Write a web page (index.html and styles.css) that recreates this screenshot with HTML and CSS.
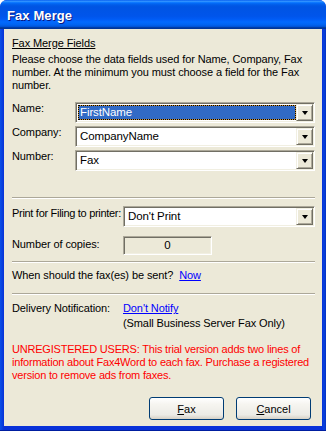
FILE: index.html
```html
<!DOCTYPE html>
<html>
<head>
<meta charset="utf-8">
<link rel="stylesheet" href="styles.css">
</head>
<body>
<div class="window">
  <div class="titlebar"><span class="title">Fax Merge</span></div>
  <div class="frame">
    <div class="client">
      <div class="heading">Fax Merge Fields</div>
      <div class="intro">Please choose the data fields used for Name, Company, Fax number. At the minimum you must choose a field for the Fax number.</div>

      <div class="fields">
        <div class="row">
          <div class="label narrow">Name:</div>
          <div class="combo">
            <div class="combo-text focused"><span class="focus-inner">FirstName</span></div>
            <div class="drop"><span class="arrow"></span></div>
          </div>
        </div>
        <div class="row">
          <div class="label narrow">Company:</div>
          <div class="combo">
            <div class="combo-text">CompanyName</div>
            <div class="drop"><span class="arrow"></span></div>
          </div>
        </div>
        <div class="row">
          <div class="label narrow">Number:</div>
          <div class="combo">
            <div class="combo-text">Fax</div>
            <div class="drop"><span class="arrow"></span></div>
          </div>
        </div>
      </div>

      <div class="sep sep1"></div>

      <div class="row print-row">
        <div class="label wide print-label">Print for Filing to printer:</div>
        <div class="combo">
          <div class="combo-text">Don't Print</div>
          <div class="drop"><span class="arrow"></span></div>
        </div>
      </div>
      <div class="row copies-row">
        <div class="label wide copies-label">Number of copies:</div>
        <div class="copies">0</div>
      </div>

      <div class="sep sep2"></div>

      <div class="when">When should the fax(es) be sent?&nbsp;&nbsp;<a class="link">Now</a></div>

      <div class="sep sep3"></div>

      <div class="row delivery">
        <div class="label wide">Delivery Notification:</div>
        <div class="delivery-info">
          <a class="link">Don't Notify</a>
          <div class="note">(Small Business Server Fax Only)</div>
        </div>
      </div>

      <div class="warning">UNREGISTERED USERS: This trial version adds two lines of information about Fax4Word to each fax. Purchase a registered version to remove ads from faxes.</div>

      <div class="buttons">
        <button class="btn"><u>F</u>ax</button>
        <button class="btn"><u>C</u>ancel</button>
      </div>
    </div>
  </div>
</div>
</body>
</html>
```

FILE: styles.css
```css
* { box-sizing: border-box; }
html, body { margin: 0; padding: 0; }
body {
  width: 326px;
  height: 431px;
  overflow: hidden;
  background: #fff;
  font-family: "Liberation Sans", Arial, sans-serif;
  font-size: 11px;
  letter-spacing: -0.1px;
  color: #000;
}
.window {
  width: 326px;
  height: 431px;
  display: flex;
  flex-direction: column;
  border-radius: 7px 7px 0 0;
  overflow: hidden;
  background: #0831D9;
}
.titlebar {
  height: 29px;
  flex: none;
  display: flex;
  align-items: center;
  padding-left: 7px;
  padding-top: 1px;
  background: linear-gradient(to bottom, #0058EE 0%, #3593FF 4%, #288EFF 6%, #127DFF 8%, #036FFC 10%, #0262EE 14%, #0057E5 20%, #0054E3 24%, #0055EB 56%, #005BF5 66%, #026AFE 76%, #0062EF 86%, #0052D6 92%, #0040AB 94%, #003092 100%);
}
.title {
  color: #fff;
  font-weight: bold;
  font-size: 13px;
  letter-spacing: 0.1px;
  text-shadow: 1px 1px 0 #0A1883;
}
.frame {
  flex: 1;
  display: flex;
  padding: 0 4px 4px 4px;
  background: linear-gradient(to right, #0A4FE8 0, #0842DE 2px, #0831D9 4px, #0831D9 calc(100% - 4px), #0842DE calc(100% - 2px), #0631C0 100%);
  border-bottom: 1px solid #001EA0;
}
.client {
  flex: 1;
  background: #ECE9D8;
  padding: 8px 7px 0 8px;
  display: flex;
  flex-direction: column;
  line-height: 13px;
}
.heading {
  text-decoration: underline;
  margin-bottom: 3px;
}
.intro { margin-bottom: 10px; }
.fields { display: flex; flex-direction: column; gap: 3px; }
.row { display: flex; align-items: flex-start; }
.label { flex: none; margin-top: 0; white-space: nowrap; }
.narrow { width: 63px; }
.wide { width: 111px; }
.print-label { letter-spacing: -0.3px; }
.combo {
  flex: 1;
  height: 21px;
  display: flex;
  border-style: solid;
  border-width: 1px;
  border-color: #ACA899 #fff #fff #ACA899;
  box-shadow: inset 1px 1px 0 #716F64, inset -1px -1px 0 #F1EFE2;
  background: #fff;
  padding: 2px;
}
.combo-text {
  flex: 1;
  padding-left: 2px;
  line-height: 15px;
  font-size: 11.5px;
  white-space: nowrap;
}
.combo-text.focused {
  background: #CE953A;
  border: 1px dotted #000;
  padding: 0;
  display: flex;
}
.focus-inner {
  flex: 1;
  background: #316AC5;
  color: #fff;
  padding-left: 1px;
  line-height: 13px;
}
.drop {
  width: 17px;
  flex: none;
  margin: -1px -1px -1px 0;
  background: #ECE9D8;
  border-style: solid;
  border-width: 1px;
  border-color: #F1EFE2 #716F64 #716F64 #F1EFE2;
  box-shadow: inset 1px 1px 0 #fff, inset -1px -1px 0 #ACA899;
  display: flex;
  align-items: center;
  justify-content: center;
}
.arrow {
  width: 0;
  height: 0;
  border-left: 3.5px solid transparent;
  border-right: 3.5px solid transparent;
  border-top: 4px solid #000;
  margin-top: 1px;
}
.sep {
  height: 2px;
  border-top: 1px solid #ACA899;
  border-bottom: 1px solid #fff;
  flex: none;
}
.sep1 { margin-top: 26px; }
.print-row { margin-top: 7px; }
.print-row .label { margin-top: 1px; }
.copies-row { margin-top: 9px; }
.copies-label { margin-top: 2px; }
.copies {
  width: 89px;
  height: 19px;
  border-style: solid;
  border-width: 1px;
  border-color: #ACA899 #fff #fff #ACA899;
  box-shadow: inset 1px 1px 0 #716F64, inset -1px -1px 0 #F1EFE2;
  text-align: center;
  line-height: 16px;
  font-size: 11.5px;
}
.sep2 { margin-top: 6px; }
.when { margin-top: 6px; height: 13px; }
.link { color: #0000FF; text-decoration: underline; }
.sep3 { margin-top: 11px; }
.delivery { margin-top: 7px; }
.delivery .label { margin-top: 0; }
.note { margin-top: 2px; }
.warning {
  color: #FF0000;
  margin-top: 13px;
  letter-spacing: -0.2px;
  padding-right: 2px;
}
.buttons {
  margin-top: 15px;
  display: flex;
  justify-content: flex-end;
  gap: 12px;
  padding-right: 4px;
}
.btn {
  width: 75px;
  height: 23px;
  font-family: "Liberation Sans", Arial, sans-serif;
  font-size: 11px;
  color: #000;
  border: 1px solid #003C74;
  border-radius: 3px;
  background: linear-gradient(to bottom, #FFFFFF 0%, #F6F5F0 30%, #ECEBE6 80%, #D6D0C5 100%);
  padding: 0;
}
```
